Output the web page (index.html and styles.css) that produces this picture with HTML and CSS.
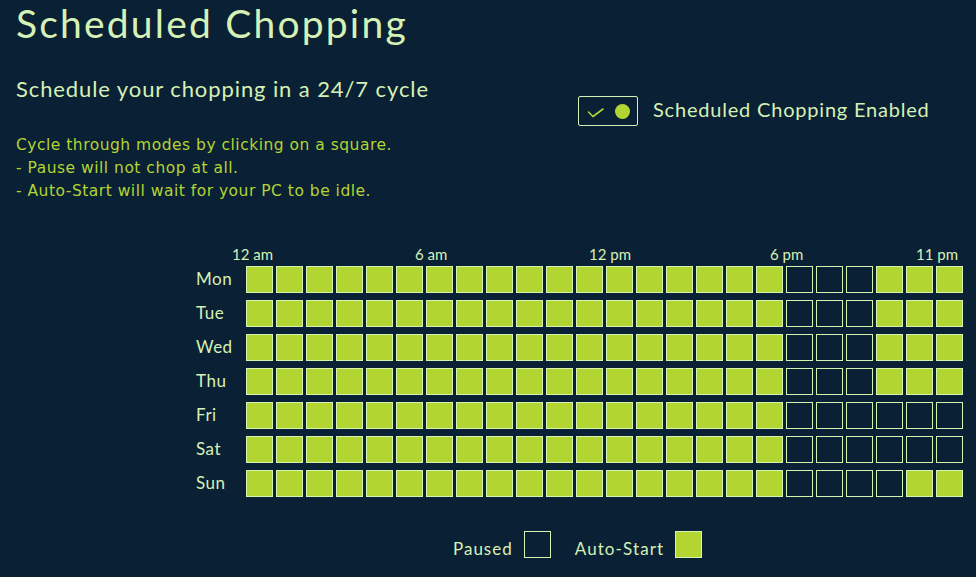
FILE: index.html
```html
<!DOCTYPE html>
<html lang="en">
<head>
<meta charset="utf-8">
<title>Scheduled Chopping</title>
<link rel="stylesheet" href="styles.css">
</head>
<body>
<main class="page">
  <h1 class="title">Scheduled Chopping</h1>
  <section class="intro">
    <div class="intro-left">
      <h2 class="subtitle">Schedule your chopping in a 24/7 cycle</h2>
      <p class="desc">Cycle through modes by clicking on a square.<br>- Pause will not chop at all.<br>- Auto-Start will wait for your PC to be idle.</p>
    </div>
    <div class="toggle-row">
      <div class="toggle">
        <svg class="check" width="18" height="12" viewBox="0 0 18 12"><polyline points="1.5,5 6,9.5 16,2" fill="none" stroke="#b3d532" stroke-width="1.6" stroke-linecap="round" stroke-linejoin="round"/></svg>
        <span class="knob"></span>
      </div>
      <span class="toggle-label">Scheduled Chopping Enabled</span>
    </div>
  </section>

  <section class="schedule">
    <div class="hours">
      <span class="hour h0">12 am</span>
      <span class="hour h6">6 am</span>
      <span class="hour h12">12 pm</span>
      <span class="hour h18">6 pm</span>
      <span class="hour h23">11 pm</span>
    </div>
    <div class="grid">
      <span class="day">Mon</span>
      <span class="cell on"></span><span class="cell on"></span><span class="cell on"></span><span class="cell on"></span><span class="cell on"></span><span class="cell on"></span><span class="cell on"></span><span class="cell on"></span><span class="cell on"></span><span class="cell on"></span><span class="cell on"></span><span class="cell on"></span><span class="cell on"></span><span class="cell on"></span><span class="cell on"></span><span class="cell on"></span><span class="cell on"></span><span class="cell on"></span><span class="cell"></span><span class="cell"></span><span class="cell"></span><span class="cell on"></span><span class="cell on"></span><span class="cell on"></span>
      <span class="day">Tue</span>
      <span class="cell on"></span><span class="cell on"></span><span class="cell on"></span><span class="cell on"></span><span class="cell on"></span><span class="cell on"></span><span class="cell on"></span><span class="cell on"></span><span class="cell on"></span><span class="cell on"></span><span class="cell on"></span><span class="cell on"></span><span class="cell on"></span><span class="cell on"></span><span class="cell on"></span><span class="cell on"></span><span class="cell on"></span><span class="cell on"></span><span class="cell"></span><span class="cell"></span><span class="cell"></span><span class="cell on"></span><span class="cell on"></span><span class="cell on"></span>
      <span class="day">Wed</span>
      <span class="cell on"></span><span class="cell on"></span><span class="cell on"></span><span class="cell on"></span><span class="cell on"></span><span class="cell on"></span><span class="cell on"></span><span class="cell on"></span><span class="cell on"></span><span class="cell on"></span><span class="cell on"></span><span class="cell on"></span><span class="cell on"></span><span class="cell on"></span><span class="cell on"></span><span class="cell on"></span><span class="cell on"></span><span class="cell on"></span><span class="cell"></span><span class="cell"></span><span class="cell"></span><span class="cell on"></span><span class="cell on"></span><span class="cell on"></span>
      <span class="day">Thu</span>
      <span class="cell on"></span><span class="cell on"></span><span class="cell on"></span><span class="cell on"></span><span class="cell on"></span><span class="cell on"></span><span class="cell on"></span><span class="cell on"></span><span class="cell on"></span><span class="cell on"></span><span class="cell on"></span><span class="cell on"></span><span class="cell on"></span><span class="cell on"></span><span class="cell on"></span><span class="cell on"></span><span class="cell on"></span><span class="cell on"></span><span class="cell"></span><span class="cell"></span><span class="cell"></span><span class="cell on"></span><span class="cell on"></span><span class="cell on"></span>
      <span class="day">Fri</span>
      <span class="cell on"></span><span class="cell on"></span><span class="cell on"></span><span class="cell on"></span><span class="cell on"></span><span class="cell on"></span><span class="cell on"></span><span class="cell on"></span><span class="cell on"></span><span class="cell on"></span><span class="cell on"></span><span class="cell on"></span><span class="cell on"></span><span class="cell on"></span><span class="cell on"></span><span class="cell on"></span><span class="cell on"></span><span class="cell on"></span><span class="cell"></span><span class="cell"></span><span class="cell"></span><span class="cell"></span><span class="cell"></span><span class="cell"></span>
      <span class="day">Sat</span>
      <span class="cell on"></span><span class="cell on"></span><span class="cell on"></span><span class="cell on"></span><span class="cell on"></span><span class="cell on"></span><span class="cell on"></span><span class="cell on"></span><span class="cell on"></span><span class="cell on"></span><span class="cell on"></span><span class="cell on"></span><span class="cell on"></span><span class="cell on"></span><span class="cell on"></span><span class="cell on"></span><span class="cell on"></span><span class="cell on"></span><span class="cell"></span><span class="cell"></span><span class="cell"></span><span class="cell"></span><span class="cell"></span><span class="cell"></span>
      <span class="day">Sun</span>
      <span class="cell on"></span><span class="cell on"></span><span class="cell on"></span><span class="cell on"></span><span class="cell on"></span><span class="cell on"></span><span class="cell on"></span><span class="cell on"></span><span class="cell on"></span><span class="cell on"></span><span class="cell on"></span><span class="cell on"></span><span class="cell on"></span><span class="cell on"></span><span class="cell on"></span><span class="cell on"></span><span class="cell on"></span><span class="cell on"></span><span class="cell"></span><span class="cell"></span><span class="cell"></span><span class="cell"></span><span class="cell on"></span><span class="cell on"></span>
    </div>
    <div class="legend">
      <span class="legend-label">Paused</span>
      <span class="cell legend-box"></span>
      <span class="legend-label second">Auto-Start</span>
      <span class="cell on legend-box"></span>
    </div>
  </section>
</main>
</body>
</html>
```

FILE: styles.css
```css
html, body {
  margin: 0;
  padding: 0;
  background: #0a2034;
}
body {
  font-family: Lato, "Open Sans", sans-serif;
  color: #d6f1b6;
  width: 976px;
  height: 577px;
  overflow: hidden;
}
.page {
  padding: 0 0 0 16px;
}
.title {
  margin: 0;
  font-weight: 400;
  font-size: 39px;
  line-height: 46px;
  letter-spacing: 2.2px;
}
.intro {
  display: flex;
  margin-top: 30px;
}
.intro-left {
  width: 562px;
}
.subtitle {
  margin: 0;
  font-weight: 400;
  font-size: 22px;
  line-height: 26px;
  letter-spacing: 0.9px;
}
.desc {
  margin: 32px 0 0 0;
  font-family: "DejaVu Sans", sans-serif;
  font-size: 15.5px;
  line-height: 23px;
  letter-spacing: 0.5px;
  color: #b3d434;
}
.toggle-row {
  display: flex;
  align-items: center;
  margin-top: 20px;
  height: 30px;
  align-self: flex-start;
}
.toggle {
  box-sizing: border-box;
  width: 60px;
  height: 30px;
  border: 1px solid #d6f1b6;
  border-radius: 2px;
  display: flex;
  align-items: center;
  padding-left: 8px;
}
.check {
  display: block;
  margin-top: 3px;
}
.knob {
  width: 15px;
  height: 15px;
  border-radius: 50%;
  background: #b3d532;
  margin-left: 10px;
}
.toggle-label {
  margin-left: 15px;
  margin-top: -4px;
  font-size: 20px;
  letter-spacing: 0.8px;
}
.schedule {
  margin-top: 42px;
  padding-left: 180px;
}
.hours {
  display: grid;
  grid-template-columns: 47px repeat(24, 27px);
  column-gap: 3px;
  height: 18px;
  margin-bottom: 3px;
  font-size: 15px;
  line-height: 18px;
}
.hour {
  grid-row: 1;
  white-space: nowrap;
}
.h0 { grid-column: 2; margin-left: -14px; }
.h6 { grid-column: 8; margin-left: -11px; }
.h12 { grid-column: 14; margin-left: -17px; }
.h18 { grid-column: 20; margin-left: -16px; }
.h23 { grid-column: 25; margin-left: -20px; }
.grid {
  display: grid;
  grid-template-columns: 47px repeat(24, 27px);
  grid-auto-rows: 27px;
  column-gap: 3px;
  row-gap: 7px;
}
.day {
  font-size: 17px;
  line-height: 26px;
  letter-spacing: 0.5px;
}
.cell {
  box-sizing: border-box;
  width: 27px;
  height: 27px;
  border: 1px solid #d7f3b2;
  background: #0a2034;
}
.cell.on {
  background: #b3d532;
}
.legend {
  display: flex;
  align-items: flex-end;
  margin-top: 34px;
  margin-left: 257px;
}
.legend-label {
  font-size: 17px;
  line-height: 20px;
  letter-spacing: 1px;
  margin-right: 11px;
  margin-bottom: -1px;
}
.legend-label.second {
  margin-left: 24px;
  letter-spacing: 1.1px;
}
```
